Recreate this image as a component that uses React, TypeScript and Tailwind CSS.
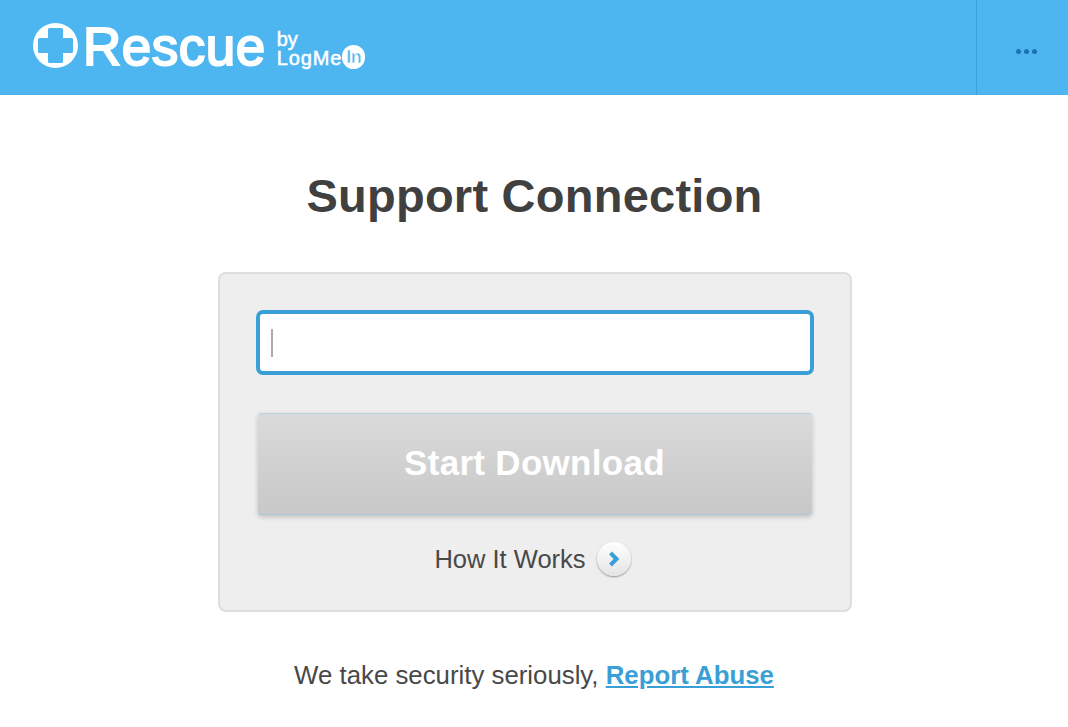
export default function App() {
  return (
    <div className="w-[1068px] h-[727px] overflow-hidden bg-white font-['Liberation_Sans',Arial,sans-serif] text-[#444]">
      {/* Header */}
      <header className="h-[95px] bg-[#4db6f1] flex">
        <div className="flex-1 flex items-center pl-[33px]">
          <svg width="45" height="45" viewBox="0 0 45 45" className="mt-[-5px]">
            <circle cx="22.5" cy="22.5" r="22.5" fill="#fff" />
            <path
              d="M16.500 6.500h12v10h10v12h-10v10h-12v-10h-10v-12h10z"
              fill="#4db6f1"
              stroke="#4db6f1"
              strokeWidth="3"
              strokeLinejoin="round"
            />
          </svg>
          <span className="ml-[5px] mt-[-3px] text-[53px] leading-none tracking-[0.5px] text-white [-webkit-text-stroke:2px_white]">
            Rescue
          </span>
          <div className="ml-[11px] mt-[5px] flex flex-col text-white text-[20px] leading-[16px] [-webkit-text-stroke:0.5px_white]">
            <span>by</span>
            <div className="flex items-center tracking-[0.9px]">
              LogMe
              <span className="mt-[-2px] w-[23px] h-[24px] rounded-full bg-white text-[#4db6f1] text-[18px] font-bold tracking-[-0.5px] flex items-center justify-center">
                In
              </span>
            </div>
          </div>
        </div>
        <div className="w-[92px] border-l border-[#3f9fd8] flex items-center justify-center gap-[3px] pt-[7px] pl-[8px]">
          <span className="w-[5px] h-[5px] rounded-full bg-[#1a74ad]" />
          <span className="w-[5px] h-[5px] rounded-full bg-[#1a74ad]" />
          <span className="w-[5px] h-[5px] rounded-full bg-[#1a74ad]" />
        </div>
      </header>

      <main className="flex flex-col items-center">
        <h1 className="mt-[74px] ml-[1px] text-[47px] leading-[54px] font-bold tracking-[0.25px] text-[#404040]">Support Connection</h1>

        {/* Card */}
        <div className="mt-[49px] ml-[1px] w-[634px] h-[340px] rounded-[8px] border-2 border-[#dedede] bg-[#eee] pt-[36px] px-[36px]">
          <div className="h-[65px] rounded-[7px] border-[4px] border-[#3a9fd6] bg-white flex items-center pl-[11px]">
            <span className="w-[2px] h-[28px] bg-[#aaa]" />
          </div>

          <button
            type="button"
            className="mt-[38px] ml-[2px] w-[554px] h-[102px] pb-[2px] rounded-[3px] border-t border-b border-t-[#bcd2e0] border-b-[#a9c6da] bg-gradient-to-b from-[#dadada] to-[#c8c8c8] shadow-[0_2px_5px_rgba(0,0,0,0.2)] text-white text-[35px] font-bold tracking-[0.3px]"
          >
            Start Download
          </button>

          <div className="mt-[27px] flex items-center justify-center gap-[11px] pr-[4px]">
            <span className="text-[25.500px] leading-[34px] text-[#484848]">How It Works</span>
            <span className="w-[34px] h-[34px] rounded-full bg-gradient-to-b from-white to-[#e4e4e4] shadow-[0_1px_2px_rgba(0,0,0,0.4)] flex items-center justify-center">
              <svg width="14" height="18" viewBox="0 0 14 18">
                <path d="M3.500 3l6 6-6 6" fill="none" stroke="#3a9fd6" strokeWidth="4" />
              </svg>
            </span>
          </div>
        </div>

        <p className="mt-[46px] text-[25.800px] leading-[34px] text-[#484848]">
          We take security seriously,{' '}
          <a href="#" className="font-bold text-[#3a9fd6] underline">
            Report Abuse
          </a>
        </p>
      </main>
    </div>
  );
}
